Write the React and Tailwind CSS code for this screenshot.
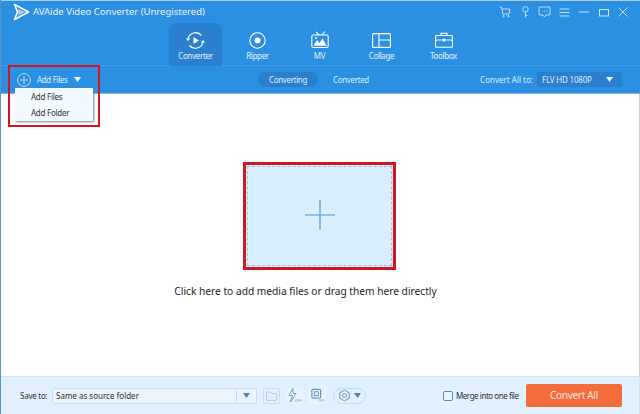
import React from "react";

const ui = { fontFamily: '"Noto Sans", "Liberation Sans", sans-serif' };

function Tab({ label, active, children }) {
  return (
    <div className={`flex h-[43px] w-[53px] flex-col items-center rounded-t-lg pt-[6px] ${active ? "bg-[#2a80cf]" : ""}`}>
      <div className="flex h-[22px] items-center justify-center">{children}</div>
      <span className="text-[8px] leading-[10px] tracking-[-0.35px] text-[#e3f1fd]">{label}</span>
    </div>
  );
}

function Caret({ className }) {
  return (
    <svg width="7" height="5" viewBox="0 0 7 5" className={className}>
      <path d="M0 0H7L3.5 5Z" fill="currentColor" />
    </svg>
  );
}

export default function App() {
  return (
    <div className="relative flex h-[414px] w-[640px] flex-col overflow-hidden bg-white border-l border-[#5b93c4]" style={ui}>
      {/* Header */}
      <div className="h-[66px] shrink-0 border-t border-[#a9cdec] border-b border-b-[#3f9be6] bg-[#2b90e2]">
        <div className="flex h-[22px] items-center pl-[12px] pr-[12px]">
          <svg width="17" height="18" viewBox="0 0 17 18" fill="none">
            <path d="M1.5 1.5L15.5 9L1.5 16.5L4.5 9Z" stroke="#fff" strokeWidth="1.6" strokeLinejoin="round" />
            <path d="M5 6L12 9L5.5 12.5" fill="#a8d2f3" />
          </svg>
          <span className="ml-[3px] text-[9.5px] leading-[12px] text-[#e7f3fd]">AVAide Video Converter (Unregistered)</span>
          <div className="ml-auto flex items-center text-[#cfe6fa]">
            <svg width="12" height="12" viewBox="0 0 12 12" fill="none" stroke="currentColor" strokeWidth="0.9">
              <path d="M0.5 1H2.5L4 8H10L11 3H3" /><circle cx="4.5" cy="10.3" r="0.8" /><circle cx="9.5" cy="10.3" r="0.8" />
            </svg>
            <svg className="ml-[10px]" width="9" height="12" viewBox="0 0 9 12" fill="none" stroke="currentColor" strokeWidth="0.9">
              <circle cx="4.5" cy="3.3" r="2.7" /><path d="M4.5 6V11.5M4.5 9.5H6.5" />
            </svg>
            <svg className="ml-[8px]" width="13" height="12" viewBox="0 0 13 12" fill="none" stroke="currentColor" strokeWidth="0.9">
              <path d="M2 1H11Q12 1 12 2V8Q12 9 11 9H8L6.5 11L5 9H2Q1 9 1 8V2Q1 1 2 1Z" />
              <path d="M4 5H4.8M6.2 5H7M8.4 5H9.2" />
            </svg>
            <svg className="ml-[8px]" width="11" height="9" viewBox="0 0 11 9" stroke="currentColor" strokeWidth="0.9">
              <path d="M0.5 1H10.5M0.5 4.5H10.5M0.5 8H10.5" />
            </svg>
            <svg className="ml-[9px]" width="10" height="2" viewBox="0 0 10 2" stroke="currentColor">
              <path d="M0 1H10" />
            </svg>
            <svg className="ml-[10px]" width="10" height="9" viewBox="0 0 10 9" fill="none" stroke="currentColor">
              <rect x="0.5" y="1.5" width="9" height="6.5" />
            </svg>
            <svg className="ml-[9px]" width="10" height="10" viewBox="0 0 10 10" stroke="currentColor" strokeWidth="0.9">
              <path d="M0.5 0.5L9.5 9.5M9.5 0.5L0.5 9.5" />
            </svg>
          </div>
        </div>
        <div className="ml-[168px] flex gap-[9px]">
          <Tab label="Converter" active>
            <svg width="21" height="21" viewBox="0 0 21 21" fill="none" stroke="#fff" strokeWidth="1.2">
              <path d="M3 9A7.7 7.7 0 0 1 16.5 5.5M18 12A7.7 7.7 0 0 1 4.5 15.5" />
              <path d="M0.8 8.5H5.2L3 11Z M15.8 12.5H20.2L18 10Z" fill="#fff" stroke="none" />
              <path d="M8.5 7L14 10.5L8.5 14Z" fill="#fff" stroke="none" />
            </svg>
          </Tab>
          <Tab label="Ripper">
            <svg width="17" height="17" viewBox="0 0 17 17" fill="none">
              <circle cx="8.5" cy="8.5" r="7.7" stroke="#fff" strokeWidth="1.1" />
              <circle cx="8.5" cy="8.5" r="3" fill="#fff" />
            </svg>
          </Tab>
          <Tab label="MV">
            <svg width="18" height="18" viewBox="0 0 18 18" fill="none" stroke="#fff" strokeWidth="1.1">
              <rect x="0.8" y="4" width="16.4" height="12.5" rx="1.5" />
              <path d="M5 0.8L8 4M14 0.5L11 4" />
              <path d="M2.5 14.8L6 9L8.5 12L11.5 7.5L15.5 14.8Z" fill="#fff" stroke="none" />
              <circle cx="5" cy="7" r="1" fill="#fff" stroke="none" />
            </svg>
          </Tab>
          <Tab label="Collage">
            <svg width="19" height="15" viewBox="0 0 19 15" fill="none" stroke="#fff" strokeWidth="1.1">
              <rect x="0.6" y="0.6" width="17.8" height="13.8" rx="1" />
              <path d="M7 0.6V14.4M7 7H18.4" />
            </svg>
          </Tab>
          <Tab label="Toolbox">
            <svg width="18" height="16" viewBox="0 0 18 16" fill="none" stroke="#fff" strokeWidth="1.1">
              <rect x="0.6" y="3.5" width="16.8" height="11.8" rx="1" />
              <path d="M6 3.5V1.2H12V3.5M0.6 8H6.5M11.5 8H17.4" />
              <rect x="7.3" y="6.8" width="3.4" height="2.6" fill="#fff" stroke="none" />
            </svg>
          </Tab>
        </div>
      </div>

      {/* Toolbar */}
      <div className="relative flex h-[27px] shrink-0 items-center bg-[#2b90e2] pl-[16px] pr-[18px] shadow-[0_1px_0_#7ab7ea]">
        <svg width="14" height="14" viewBox="0 0 14 14" fill="none" stroke="#dcefff" strokeWidth="0.8">
          <circle cx="7" cy="7" r="6.4" /><path d="M7 3V11M3 7H11" />
        </svg>
        <span className="ml-[6px] w-[31px] whitespace-nowrap text-[8px] tracking-[-0.35px] text-[#dcefff]">Add Files</span>
        <Caret className="ml-[6px] text-[#eef7ff]" />
        <div className="absolute left-[257px] flex items-center">
          <span className="flex h-[15px] w-[60px] items-center justify-center rounded-full bg-[#2a80cf] text-[8px] tracking-[-0.35px] text-[#dcefff]">Converting</span>
          <span className="ml-[15px] text-[8px] tracking-[-0.35px] text-[#dcefff]">Converted</span>
        </div>
        <div className="ml-auto flex items-center">
          <span className="mr-[4px] text-[8px] text-[#dcefff]">Convert All to:</span>
          <div className="flex h-[15px] w-[85px] items-center justify-between rounded-[2px] bg-[#2a80cf] pl-[5px] pr-[3px] text-[8px] tracking-[-0.2px] text-[#dcefff]">
            <span>FLV HD 1080P</span>
            <Caret className="mr-[6px] text-[#eef7ff]" />
          </div>
        </div>
      </div>

      {/* Main */}
      <div className="flex flex-1 flex-col items-center border-r border-[#c3d0db] pt-[69px]">
        <div className="-ml-[1px] flex h-[108px] w-[153px] items-center justify-center border-[3px] border-[#d4151f] bg-[#d9effe] pb-[3px] outline-1 -outline-offset-[5px] outline-dashed outline-[#a9c1d4]">
          <svg width="30" height="30" viewBox="0 0 30 30" stroke="#4a9ac8" strokeWidth="1.2">
            <path d="M15 0V30M0 15H30" />
          </svg>
        </div>
        <p className="-ml-[29px] mt-[14px] text-[10.2px] leading-[14px] text-[#222]">Click here to add media files or drag them here directly</p>
      </div>

      {/* Footer */}
      <div className="flex h-[38px] shrink-0 items-center border-t border-r border-[#cfe3f5] bg-[#e1f0fe] pl-[19px] pr-[17px]">
        <span className="w-[27px] whitespace-nowrap text-[8px] tracking-[-0.25px] text-[#333]">Save to:</span>
        <div className="ml-[5px] flex h-[16px] w-[205px] items-center rounded-[2px] border border-[#c5ddf2] bg-[#e9f4fe] pl-[3px]">
          <span className="flex-1 text-[8px] text-[#333]">Same as source folder</span>
          <div className="flex h-full w-[20px] items-center justify-center border-l border-[#c5ddf2] text-[#4a86b8]">
            <Caret />
          </div>
        </div>
        <div className="ml-[6px] flex h-[16px] w-[17px] items-center justify-center rounded-[2px] border border-[#c5ddf2]">
          <svg width="11" height="10" viewBox="0 0 11 10" fill="none" stroke="#b7cfe2">
            <path d="M0.5 1H5L6 2.5H10.5V9.5H0.5Z" />
          </svg>
        </div>
        <div className="ml-[6px] flex h-[16px] w-[17px] items-center justify-center rounded-[2px] bg-[#eaf4fd]">
          <svg width="16" height="15" viewBox="0 0 16 15" fill="none" stroke="#5f8fb3" strokeWidth="0.8">
            <path d="M6 0.5L2 7.5H5.5L3.5 14L9 5.5H6Z" />
            <text x="8" y="13.5" fontSize="3.6" fill="#7aa0bd" stroke="none">OFF</text>
          </svg>
        </div>
        <div className="ml-[6px] flex h-[16px] w-[17px] items-center justify-center rounded-[2px] bg-[#eaf4fd]">
          <svg width="16" height="15" viewBox="0 0 16 15" fill="none" stroke="#3f82b3" strokeWidth="0.8">
            <rect x="2" y="1.5" width="8.5" height="8.5" />
            <rect x="4.3" y="3.8" width="4" height="4" />
            <path d="M1 3.5H2M1 5.5H2M1 7.5H2M10.5 3.5H11.5M10.5 5.5H11.5M4 0.5V1.5M6 0.5V1.5M8 0.5V1.5M4 10V11M6 10V11" />
            <text x="8" y="14" fontSize="3.6" fill="#7aa0bd" stroke="none">OFF</text>
          </svg>
        </div>
        <div className="ml-[7px] flex h-[16px] w-[33px] items-center justify-center gap-[3px] rounded-full border border-[#c5ddf2] text-[#4a86b8]">
          <svg width="13" height="13" viewBox="0 0 24 24" fill="none" stroke="#6d95b5" strokeWidth="1.8">
            <path d="M12 2L20.7 7V17L12 22L3.3 17V7Z" /><circle cx="12" cy="12" r="3.5" />
          </svg>
          <Caret />
        </div>
        <div className="ml-auto flex items-center">
          <span className="h-[10px] w-[10px] rounded-[2px] border border-[#4d93c9] bg-[#e9f4fe]" />
          <span className="ml-[3px] w-[62px] whitespace-nowrap text-[8px] tracking-[-0.45px] text-[#333]">Merge into one file</span>
          <button className="ml-[8px] h-[23px] w-[96px] rounded-[2px] bg-[#f26c3c] text-[10px] tracking-[-0.3px] text-[#fde6dc]">Convert All</button>
        </div>
      </div>

      {/* Dropdown menu over page */}
      <div className="absolute left-[14px] top-[88px] flex h-[33px] w-[78px] flex-col justify-center bg-[#f3faff] pl-[16px] text-[8px] leading-[16px] tracking-[-0.25px] text-[#333] shadow-[1px_1px_2px_#6b7f90]">
        <span>Add Files</span>
        <span>Add Folder</span>
      </div>
      {/* Annotation */}
      <div className="pointer-events-none absolute left-[7px] top-[65px] h-[62px] w-[92px] border-2 border-[#d4151f]" />
    </div>
  );
}
